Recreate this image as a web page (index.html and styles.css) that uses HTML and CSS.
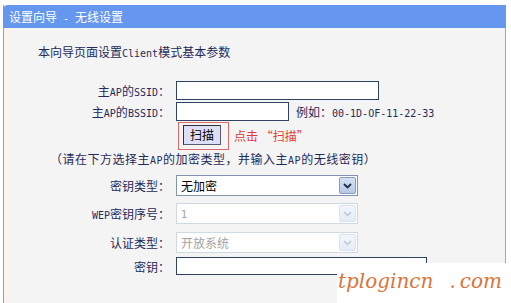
FILE: index.html
```html
<!DOCTYPE html>
<html lang="zh-CN">
<head>
<meta charset="utf-8">
<title>设置向导 - 无线设置</title>
<link rel="stylesheet" href="styles.css">
</head>
<body>
<div class="wrap">
  <div class="panel">
    <div class="header">设置向导<span class="lat"> - </span>无线设置</div>
    <div class="intro">本向导页面设置<span class="lat">Client</span>模式基本参数</div>
    <div class="form">
      <div class="label l19">主<span class="lat">AP</span>的<span class="lat">SSID</span>：</div>
      <div class="ctrl"><div class="input w-ssid"></div></div>

      <div class="label l19">主<span class="lat">AP</span>的<span class="lat">BSSID</span>：</div>
      <div class="ctrl"><div class="input w-bssid"></div><span class="hint">例如：<span class="lat">00-1D-OF-11-22-33</span></span></div>

      <div class="label"></div>
      <div class="ctrl">
        <div class="scanbox"><div class="btn">扫描</div></div>
        <span class="red">点击 “扫描”</span>
      </div>

      <div class="note">（请在下方选择主<span class="lat">AP</span>的加密类型，并输入主<span class="lat">AP</span>的无线密钥）</div>

      <div class="label l21">密钥类型：</div>
      <div class="ctrl">
        <div class="select">
          <span class="val">无加密</span>
          <span class="arrow"><svg width="9" height="6" viewBox="0 0 9 6"><path d="M1 1 L4.5 4.5 L8 1" fill="none" stroke="#1f2d4d" stroke-width="1.8"/></svg></span>
        </div>
      </div>

      <div class="label l21"><span class="lat">WEP</span>密钥序号：</div>
      <div class="ctrl">
        <div class="select disabled">
          <span class="val"><span class="lat">1</span></span>
          <span class="arrow"><svg width="9" height="6" viewBox="0 0 9 6"><path d="M1 1 L4.5 4.5 L8 1" fill="none" stroke="#b9c7d8" stroke-width="1.5"/></svg></span>
        </div>
      </div>

      <div class="label l21">认证类型：</div>
      <div class="ctrl">
        <div class="select disabled">
          <span class="val">开放系统</span>
          <span class="arrow"><svg width="9" height="6" viewBox="0 0 9 6"><path d="M1 1 L4.5 4.5 L8 1" fill="none" stroke="#b9c7d8" stroke-width="1.5"/></svg></span>
        </div>
      </div>

      <div class="label l19">密钥：</div>
      <div class="ctrl"><div class="input w-key"></div></div>
    </div>
  </div>
  <div class="watermark"><span>tplogincn</span><span class="dot">.</span><span>com</span></div>
</div>
</body>
</html>
```

FILE: styles.css
```css
* { box-sizing: border-box; }
html, body { margin: 0; padding: 0; background: #ffffff; }
body {
  font-family: "Noto Sans CJK SC", "Noto Sans", sans-serif;
  font-size: 12px;
  color: #1f2b5a;
  font-kerning: none;
}
.lat {
  font-family: "DejaVu Sans Mono", "Liberation Mono", monospace;
  font-size: 10px;
}
.wrap {
  position: relative;
  width: 511px;
  height: 303px;
  overflow: hidden;
  padding-top: 5px;
}
.panel {
  margin-left: 3px;
  width: 503px;
  height: 298px;
  background: #f4f4f4;
  border-left: 1px solid #c89c48;
  border-right: 1px solid #d2a45a;
  box-shadow: inset 8px 0 6px -4px #fbf3ea;
}
.header {
  margin: 0 -1px;
  height: 23px;
  line-height: 23px;
  padding-left: 6px;
  background: #6597ef;
  color: #ffffff;
  border-top-left-radius: 5px;
  white-space: pre;
}
.intro {
  margin-top: 16px;
  padding-left: 34px;
  line-height: 16px;
}
.form {
  margin-top: 19px;
  display: grid;
  grid-template-columns: 166px 1fr;
  grid-template-rows: 21px 20px 29px 24px 28px 29px 25px auto;
  column-gap: 6px;
}
.label {
  text-align: right;
  white-space: nowrap;
}
.l19 { line-height: 19px; }
.l21 { line-height: 21px; }
.ctrl {
  display: flex;
  align-items: flex-start;
}
.input {
  height: 19px;
  background: #ffffff;
  border: 1px solid #2e4263;
}
.w-ssid { width: 203px; }
.w-bssid { width: 113px; }
.w-key { width: 251px; height: 18px; }
.hint {
  margin-left: 7px;
  line-height: 19px;
  white-space: nowrap;
}
.scanbox {
  margin-left: 2px;
  width: 51px;
  height: 28px;
  border: 1px solid #e06a6a;
  padding: 2px 0 0 4px;
}
.btn {
  width: 38px;
  height: 20px;
  line-height: 18px;
  text-align: center;
  color: #000000;
  background: #dcdff6;
  border: 1px solid #2f2f3f;
  border-right-color: #5a5a6a;
  border-bottom-color: #5a5a6a;
}
.red {
  margin-left: 5px;
  line-height: 28px;
  color: #e23a3a;
  white-space: nowrap;
}
.note {
  grid-column: 1 / 3;
  padding-left: 46px;
  line-height: 16px;
  letter-spacing: 0.5px;
  white-space: nowrap;
}
.select {
  width: 182px;
  height: 21px;
  display: flex;
  align-items: center;
  background: #ffffff;
  border: 1px solid #8094b0;
  padding: 1px;
}
.select .val {
  flex: 1;
  padding-left: 3px;
  line-height: 17px;
  color: #000000;
}
.select .arrow {
  width: 17px;
  height: 17px;
  display: flex;
  align-items: center;
  justify-content: center;
  background: linear-gradient(#d6e2f4, #b6c8e4);
  border: 1px solid #8a9cbc;
  border-radius: 2px;
}
.select.disabled {
  border-color: #cfd9e4;
  background: #fefefe;
}
.select.disabled .val { color: #a3a3a3; }
.select.disabled .arrow {
  background: linear-gradient(#f2f6fb, #e4ecf6);
  border-color: #dae3ee;
}
.watermark {
  position: absolute;
  right: 0;
  bottom: 0;
  width: 174px;
  height: 40px;
  background: #ffffff;
  color: #d9753c;
  font-family: "DejaVu Serif", serif;
  font-style: italic;
  font-size: 20px;
  line-height: 36px;
  padding-left: 1px;
  white-space: nowrap;
}
.watermark .dot {
  margin: 0 4px 0 16px;
}
```
